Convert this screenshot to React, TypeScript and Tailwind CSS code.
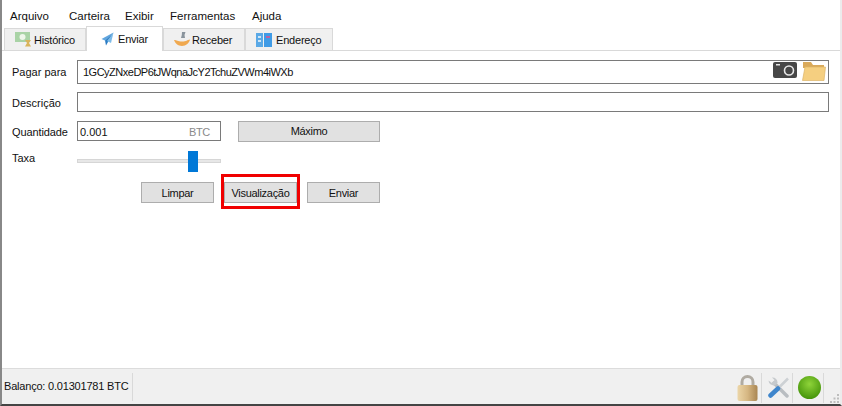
import { ReactNode } from "react";

function NotesIcon() {
  return (
    <svg width="17" height="15" viewBox="0 0 17 15">
      <rect x="0" y="0" width="15" height="10" fill="#a9d3a6" />
      <circle cx="7.500" cy="5" r="3" fill="#eef6ea" />
      <path d="M10 8h6l-2 3 2 3.500h-6l2-3.500z" fill="#d9b45c" />
    </svg>
  );
}

function PlaneIcon() {
  return (
    <svg width="13" height="14" viewBox="0 0 13 14">
      <path d="M12.500 0.500L0.500 7l3.500 1.500z" fill="#5fa5de" />
      <path d="M12.500 0.500L4 8.500l1 5z" fill="#2b7cc4" />
      <path d="M12.500 0.500L6 9l4 2z" fill="#7dbbe8" />
    </svg>
  );
}

function ReceiveIcon() {
  return (
    <svg width="16" height="15" viewBox="0 0 16 15">
      <path d="M8 0h3.500l-1 3 .5 3H7l.8-3z" fill="#8a949c" />
      <path d="M0 8c3 0 3.500 1.500 8 1.500S13 8 16 7.500C15.500 10.500 12 14 8 14S1 11 0 8z" fill="#f0a950" />
    </svg>
  );
}

function AddressIcon() {
  return (
    <svg width="16" height="14" viewBox="0 0 16 14">
      <rect x="0" y="0" width="7" height="14" fill="#5aa9e6" />
      <rect x="8" y="0" width="8" height="14" fill="#3f9be6" />
      <rect x="2" y="3" width="3" height="2" fill="#cfe6f7" />
      <rect x="2" y="7" width="3" height="2" fill="#cfe6f7" />
      <rect x="10" y="3" width="4" height="2" fill="#c060a0" />
    </svg>
  );
}

function CameraIcon() {
  return (
    <svg width="24" height="16" viewBox="0 0 24 16">
      <rect x="0" y="0" width="24" height="16" rx="2" fill="#474747" />
      <rect x="3" y="2" width="4" height="1.500" fill="#e5e5e5" />
      <circle cx="16" cy="8.500" r="4.500" fill="none" stroke="#e8e8e8" strokeWidth="1.600" />
    </svg>
  );
}

function FolderIcon() {
  return (
    <svg width="24" height="19" viewBox="0 0 24 19">
      <path d="M1 3V0h8l2 3h11v3H1z" fill="#d9a95a" />
      <path d="M3 5h20.500L22 18.500H0.500z" fill="#f5cf80" stroke="#dcb468" strokeWidth="0.700" />
    </svg>
  );
}

function LockIcon() {
  return (
    <svg width="21" height="26" viewBox="0 0 21 26">
      <defs>
        <linearGradient id="lockBody" x1="0" y1="0" x2="1" y2="0">
          <stop offset="0" stopColor="#ecd6a8" />
          <stop offset="0.500" stopColor="#d6b783" />
          <stop offset="1" stopColor="#a98653" />
        </linearGradient>
      </defs>
      <path d="M5 12V7a5.500 5.500 0 0 1 11 0v5" fill="none" stroke="#b0aba2" strokeWidth="3" />
      <rect x="0.500" y="10" width="20" height="16" rx="2" fill="url(#lockBody)" />
    </svg>
  );
}

function ToolsIcon() {
  return (
    <svg width="21" height="21" viewBox="0 0 21 21">
      <path d="M6 6l13 13" stroke="#b9bdc1" strokeWidth="3.500" strokeLinecap="round" />
      <path d="M0.500 3.500a5 5 0 0 0 7 4.500l2-2a5 5 0 0 0-5.500-5.500l2.500 2.500-2.500 3z" fill="#c6cacd" />
      <path d="M20 1.500L11 10.500" stroke="#cdd1d4" strokeWidth="2.500" />
      <path d="M10 11.500L2.500 18.500" stroke="#3f86cc" strokeWidth="4.500" strokeLinecap="round" />
    </svg>
  );
}

function StatusIcon() {
  return (
    <svg width="23" height="23" viewBox="0 0 23 23">
      <defs>
        <radialGradient id="statusGreen" cx="0.500" cy="0.350" r="0.700">
          <stop offset="0" stopColor="#8fd43a" />
          <stop offset="1" stopColor="#3f8f06" />
        </radialGradient>
      </defs>
      <circle cx="11.500" cy="11.500" r="11.500" fill="url(#statusGreen)" />
    </svg>
  );
}

function SizeGrip() {
  return (
    <svg width="10" height="10" viewBox="0 0 10 10" fill="#bdbdbd">
      <rect x="7" y="0" width="2" height="2" />
      <rect x="3.500" y="3.500" width="2" height="2" />
      <rect x="7" y="3.500" width="2" height="2" />
      <rect x="0" y="7" width="2" height="2" />
      <rect x="3.500" y="7" width="2" height="2" />
      <rect x="7" y="7" width="2" height="2" />
    </svg>
  );
}

function Tab({ active, icon, label, w, gap }: { active?: boolean; icon: ReactNode; label: string; w: string; gap: string }) {
  if (active) {
    return (
      <div className={`${w} ${gap} h-[25px] -mb-px z-10 flex items-center pl-[14px] bg-white border border-[#d9d9d9] border-b-0`}>
        {icon}
        <span className="tracking-[-0.2px]">{label}</span>
      </div>
    );
  }
  return (
    <div className={`${w} ${gap} h-[23px] mt-[2px] flex items-center pl-[10px] bg-[#f0f0f0] border border-[#d9d9d9]`}>
      {icon}
      <span className="pt-px tracking-[-0.2px]">{label}</span>
    </div>
  );
}

function Btn({ w, children }: { w: string; children: ReactNode }) {
  return (
    <div className={`${w} h-[21px] flex items-center justify-center pt-px tracking-[-0.3px] bg-[#e1e1e1] border border-[#adadad]`}>
      {children}
    </div>
  );
}

function StatusCell({ children }: { children: ReactNode }) {
  return (
    <div className="w-[31px] h-[30px] flex items-center justify-center pl-[2px] border-r border-[#d9d9d9]">
      {children}
    </div>
  );
}

export default function App() {
  return (
    <div className="font-['Liberation_Sans',sans-serif] w-[842px] h-[406px] flex flex-col bg-white text-[11px] text-[#111] overflow-hidden border-l-2 border-l-[#888] border-r-2 border-r-[#ececec] border-b-2 border-b-[#444]">
      {/* menu */}
      <div className="h-[26px] shrink-0 flex items-center pl-2 pt-[8px] text-[11.500px]">
        <span className="w-[59px]">Arquivo</span>
        <span className="w-[56px]">Carteira</span>
        <span className="w-[45px]">Exibir</span>
        <span className="w-[82px]">Ferramentas</span>
        <span>Ajuda</span>
      </div>

      {/* tabs */}
      <div className="h-[24px] shrink-0 flex items-start pl-[2px]">
        <Tab w="w-[82px]" gap="gap-[2px]" icon={<NotesIcon />} label="Histórico" />
        <Tab w="w-[77px]" gap="gap-[4px]" active icon={<PlaneIcon />} label="Enviar" />
        <Tab w="w-[82px]" gap="gap-[2px]" icon={<ReceiveIcon />} label="Receber" />
        <Tab w="w-[88px]" gap="gap-[4px]" icon={<AddressIcon />} label="Endereço" />
      </div>

      {/* send form */}
      <div className="flex-1 border-t border-[#d9d9d9] pl-[10px] pr-[11px] pt-[9px]">
        <div className="flex items-center h-[24px]">
          <span className="w-[65px]">Pagar para</span>
          <div className="flex-1 h-[24px] flex items-center justify-between border border-[#7a7a7a] pl-[5px]">
            <span className="tracking-[-0.5px]">1GCyZNxeDP6tJWqnaJcY2TchuZVWm4iWXb</span>
            <div className="flex items-start gap-[5px] -mt-[2px] pr-[2px]">
              <CameraIcon />
              <FolderIcon />
            </div>
          </div>
        </div>

        <div className="flex items-center h-[20px] mt-[8px]">
          <span className="w-[65px] pt-[2px]">Descrição</span>
          <div className="flex-1 h-[20px] border border-[#7a7a7a]" />
        </div>

        <div className="flex items-center h-[20px] mt-[9px]">
          <span className="w-[65px] pt-[2px] tracking-[-0.1px]">Quantidade</span>
          <div className="w-[144px] h-[20px] flex items-center justify-between border border-[#7a7a7a] px-[2px] pt-[2px]">
            <span>0.001</span>
            <span className="text-[#8a8a8a] pr-[8px] tracking-[-0.3px]">BTC</span>
          </div>
          <div className="ml-[17px]">
            <Btn w="w-[142px]">Máximo</Btn>
          </div>
        </div>

        <div className="flex items-center h-[22px] mt-[10px]">
          <span className="w-[65px] mb-[8px]">Taxa</span>
          <div className="w-[144px] h-[4px] mb-[2px] relative bg-[#e7e7e7] border border-[#d6d6d6]">
            <div className="absolute left-[110px] -top-[9px] w-[10px] h-[21px] bg-[#0078d7]" />
          </div>
        </div>

        <div className="flex items-center gap-[10px] mt-[9px] ml-[129px]">
          <Btn w="w-[73px]">Limpar</Btn>
          <div className="relative">
            <Btn w="w-[73px]">Visualização</Btn>
            <div className="absolute -left-[3px] -right-[3px] -top-[8px] -bottom-[6px] border-[3px] border-[#f00000]" />
          </div>
          <Btn w="w-[73px]">Enviar</Btn>
        </div>
      </div>

      {/* status bar */}
      <div className="relative h-[36px] shrink-0 flex items-center bg-[#f0f0f0] border-t border-[#dcdcdc]">
        <div className="h-[28px] flex items-center pl-[2px] w-[131px] border-r border-[#d9d9d9] whitespace-nowrap tracking-[-0.2px]">
          Balanço: 0.01301781 BTC
        </div>
        <div className="ml-auto flex items-center pr-[16px] mt-[2px]">
          <StatusCell>
            <LockIcon />
          </StatusCell>
          <StatusCell>
            <ToolsIcon />
          </StatusCell>
          <StatusCell>
            <StatusIcon />
          </StatusCell>
        </div>
        <div className="absolute right-0 bottom-0">
          <SizeGrip />
        </div>
      </div>
    </div>
  );
}
